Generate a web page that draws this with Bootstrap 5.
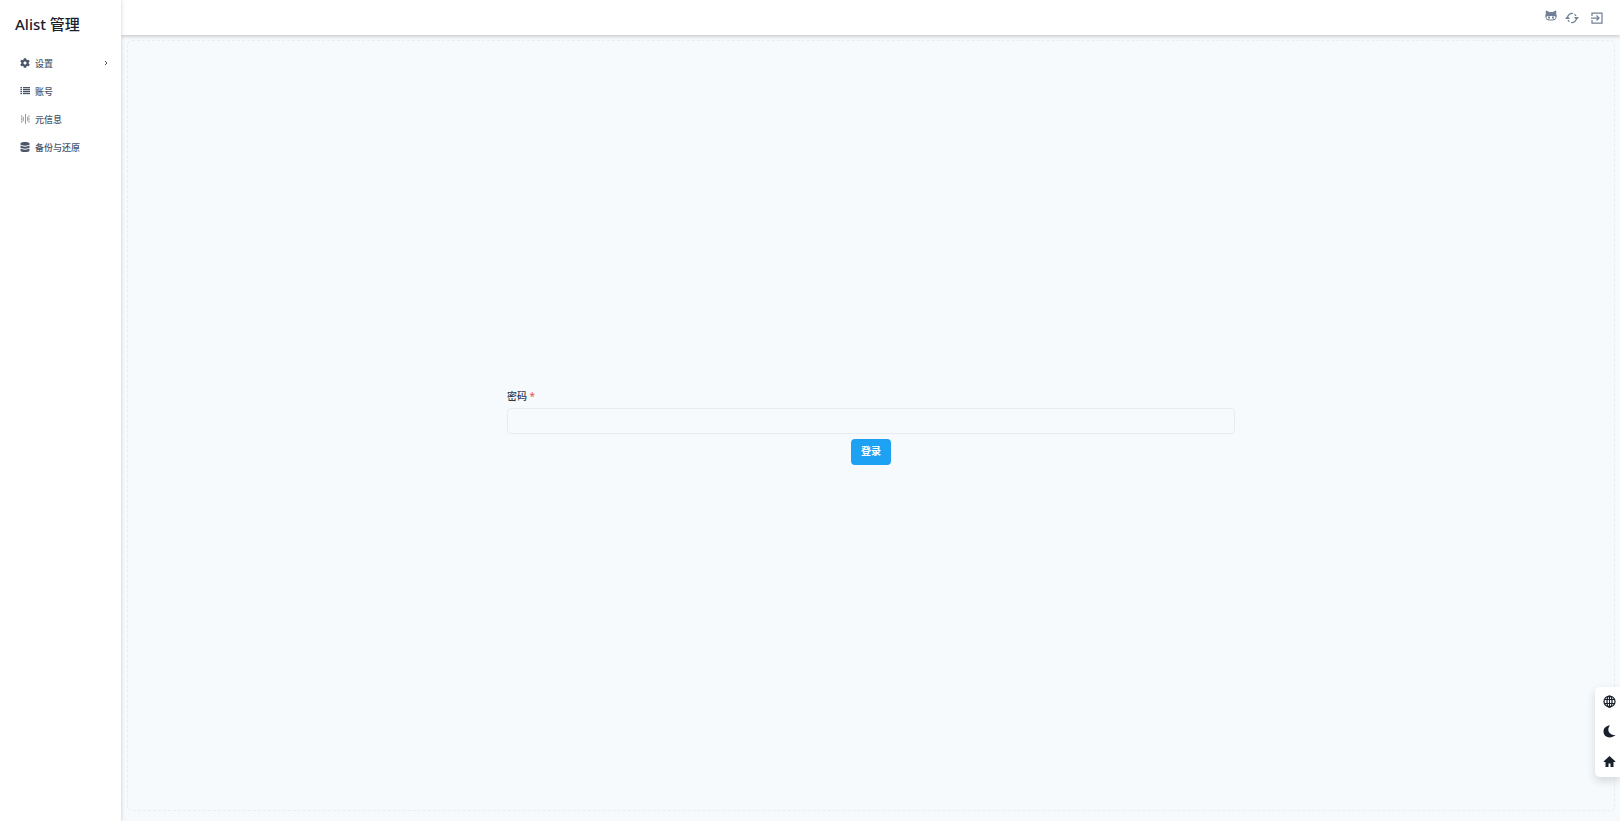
<!DOCTYPE html>
<html lang="zh-CN">
<head>
<meta charset="utf-8">
<meta name="viewport" content="width=device-width, initial-scale=1">
<title>Alist 管理</title>
<link href="https://cdn.jsdelivr.net/npm/bootstrap@5.3.0/dist/css/bootstrap.min.css" rel="stylesheet">
<style>
body { font-family: "Noto Sans", "Noto Sans CJK SC", sans-serif; font-size: 10px; line-height: 15px; color: #1a202c; background: #f7fafc; }
.sidebar { width: 121px; background: #fff; box-shadow: 0 0 4px rgba(0,0,0,.2); z-index: 2; }
.brand { font-size: 15px; line-height: 24px; font-weight: 500; padding: 12px 15px 13px; }
.menu-link { height: 28px; padding: 0 12px 0 20px; gap: 5px; font-size: 9px; font-weight: 500; color: #4a5568; text-decoration: none; }
.topbar { height: 35px; background: #fff; padding-right: 17px; box-shadow: 0 1px 4px rgba(0,0,0,.24); z-index: 1; }
.tool { color: #718096; }
.content-area { background: #f7fafd; padding: 5px 5px 10px 6px; }
.panel { border: 1px dashed #e9eef2; border-radius: 5px; }
.login { width: 49%; padding-top: 2px; }
.login .form-label { font-weight: 500; color: #2d3748; margin-bottom: 4px; }
.required { color: #e5533d; font-weight: 400; }
.login .form-control { height: 26px; background: transparent; border-color: #e6ecf1; border-radius: 4px; font-size: 10px; }
.btn-login { height: 26px; margin-top: 5px; padding: 0 10px; font-size: 10px; line-height: 15px; font-weight: 700; color: #fff; background: #1da1f2; border-radius: 4px; border: 0; }
.btn-login:hover { background: #1a94da; color: #fff; }
.dock { right: 0; bottom: 44px; width: 25px; height: 90px; padding: 0 0 1px 3px; background: #fff; border-radius: 5px 0 0 5px; box-shadow: 0 4px 10px rgba(0,0,0,.14); z-index: 3; }
.dock .btn, .tool { line-height: 0; }
.dock .btn { color: #1a202c; }
</style>
</head>
<body>
<div class="d-flex min-vh-100">
  <aside class="sidebar flex-shrink-0 position-relative">
    <h1 class="brand m-0">Alist 管理</h1>
    <nav class="d-flex flex-column">
      <a href="#" class="menu-link d-flex align-items-center">
        <svg width="10" height="10" viewBox="0 0 512 512" fill="currentColor"><path d="M487.400 315.700l-42.600-24.600c4.300-23.200 4.300-47 0-70.200l42.600-24.600c4.900-2.800 7.100-8.600 5.500-14-11.100-35.600-30-67.800-54.700-94.600-3.800-4.100-10-5.100-14.800-2.300L380.800 110c-17.900-15.400-38.500-27.300-60.800-35.100V25.800c0-5.600-3.900-10.500-9.400-11.700-36.700-8.200-74.300-7.800-109.200 0-5.500 1.200-9.400 6.100-9.400 11.700V75c-22.200 7.900-42.800 19.800-60.800 35.100L88.700 85.500c-4.900-2.800-11-1.900-14.800 2.300-24.700 26.700-43.600 58.900-54.700 94.600-1.700 5.400.6 11.200 5.500 14L67.300 221c-4.300 23.200-4.300 47 0 70.200l-42.600 24.600c-4.900 2.800-7.100 8.600-5.500 14 11.100 35.600 30 67.800 54.700 94.600 3.800 4.100 10 5.100 14.800 2.300l42.600-24.600c17.900 15.400 38.500 27.300 60.800 35.100v49.200c0 5.600 3.900 10.500 9.400 11.700 36.700 8.200 74.300 7.800 109.200 0 5.500-1.200 9.400-6.100 9.400-11.700v-49.200c22.200-7.900 42.800-19.800 60.800-35.100l42.600 24.600c4.900 2.800 11 1.900 14.800-2.300 24.700-26.700 43.600-58.900 54.700-94.600 1.500-5.500-.7-11.300-5.600-14.100zM256 336c-44.100 0-80-35.900-80-80s35.900-80 80-80 80 35.900 80 80-35.900 80-80 80z"/></svg>
        <span>设置</span>
        <svg class="ms-auto" width="6" height="6" viewBox="0 0 6 6" fill="none" stroke="currentColor"><path d="M2 1l2 2-2 2"/></svg>
      </a>
      <a href="#" class="menu-link d-flex align-items-center">
        <svg width="10" height="10" viewBox="0 0 20 20" fill="currentColor"><path opacity=".35" d="M1 2h3v15H1zm5 0h14v15H6z"/><path d="M1 2h3v2H1zm5 0h14v2H6zM1 6h3v2H1zm5 0h14v2H6zM1 10h3v2H1zm5 0h14v2H6zM1 14h3v2H1zm5 0h14v2H6z"/></svg>
        <span>账号</span>
      </a>
      <a href="#" class="menu-link d-flex align-items-center">
        <svg width="10" height="10" viewBox="0 0 20 20" fill="none" stroke="currentColor" opacity=".8"><path d="M11 0v20" stroke-width="1.500"/><path d="M3 2v4m0 2v4m0 2v4M18 2v4m0 2v4m0 2v4M2 6h5v8H2M19 6h-4v8h4M2 10h6m6 0h5"/></svg>
        <span>元信息</span>
      </a>
      <a href="#" class="menu-link d-flex align-items-center">
        <svg width="10" height="10" viewBox="0 0 20 20" fill="currentColor"><path d="M1 3c0-4 18-4 18 0v2c0 3-18 3-18 0zM1 7c4 3 14 3 18 0v4c0 3-18 3-18 0zM1 13c4 3 14 3 18 0v4c0 4-18 4-18 0z"/></svg>
        <span>备份与还原</span>
      </a>
    </nav>
  </aside>
  <div class="flex-grow-1 d-flex flex-column">
    <header class="topbar d-flex align-items-center justify-content-end position-relative">
      <a href="#" class="tool me-2 pb-1" aria-label="GitHub"><svg width="12" height="11" viewBox="0 0 24 22"><path fill="currentColor" d="M2 1c2 0 4 1 6 3h8c2-2 4-3 6-3 1 2 1 4 0 6 2 3 2 7 0 10-2 4-5 4-10 4S4 21 2 17C0 14 0 10 2 7 1 5 1 3 2 1z"/><path fill="#fff" d="M7 12h10c3 0 4 1 4 3 0 3-4 4-9 4s-9-1-9-4c0-2 1-3 4-3z"/><g fill="currentColor"><ellipse cx="8" cy="15" rx="2" ry="2.500"/><ellipse cx="16" cy="15" rx="2" ry="2.500"/></g></svg></a>
      <a href="#" class="tool me-2" aria-label="刷新"><svg width="14" height="12" viewBox="0 0 28 24" fill="none" stroke="currentColor" stroke-width="2.500"><path d="M23 12a9 9 0 0 1-11 9M5 12a9 9 0 0 1 11-9"/><path d="M19 4.500a9 9 0 0 1 3 3.500M9 19.500A9 9 0 0 1 6 16"/><path fill="currentColor" stroke="none" d="M18 10h10l-5 6zM0 14l5-6 5 6z"/></svg></a>
      <a href="#" class="tool ms-1" aria-label="退出"><svg width="12" height="12" viewBox="0 0 24 24" fill="none" stroke="currentColor" stroke-width="2.500"><path d="M2 8V2h20v20H2v-6M0 12h15M11 7l5 5-5 5"/></svg></a>
    </header>
    <main class="content-area flex-grow-1 d-flex">
      <div class="panel flex-grow-1 d-flex align-items-center justify-content-center">
        <form class="login d-flex flex-column">
          <label class="form-label" for="password">密码 <span class="required">*</span></label>
          <input type="password" class="form-control" id="password" required>
          <button type="submit" class="btn btn-login align-self-center">登录</button>
        </form>
      </div>
    </main>
  </div>
</div>
<div class="dock position-fixed d-flex flex-column justify-content-around align-items-center">
  <button type="button" class="btn p-0 border-0" aria-label="语言"><svg width="13" height="13" viewBox="0 0 26 26" fill="none" stroke="currentColor" stroke-width="2.500"><circle cx="13" cy="13" r="11"/><ellipse cx="13" cy="13" rx="5" ry="11"/><path d="M3 9h20M3 17h20M13 2v22" stroke-width="2"/></svg></button>
  <button type="button" class="btn p-0 border-0" aria-label="深色模式"><svg width="13" height="13" viewBox="0 0 26 26" fill="currentColor"><path d="M14 1C7 8 11 21 25 20 16 29 1 25 1 13 1 6 7 1 14 1z"/></svg></button>
  <button type="button" class="btn p-0 border-0" aria-label="首页"><svg width="13" height="13" viewBox="0 0 26 26" fill="currentColor"><path d="M13 2L1 13l1 1h3v10h6v-7h4v7h6V14h3l1-1z"/></svg></button>
</div>
<script src="https://cdn.jsdelivr.net/npm/bootstrap@5.3.0/dist/js/bootstrap.bundle.min.js"></script>
</body>
</html>
